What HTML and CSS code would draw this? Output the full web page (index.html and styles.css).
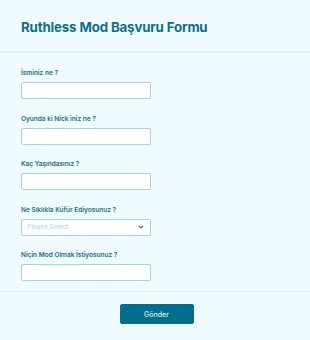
FILE: index.html
```html
<!DOCTYPE html>
<html lang="tr">
<head>
    <meta charset="UTF-8">
    <meta name="viewport" content="width=device-width, initial-scale=1.0">
    <title>Ruthless Mod Başvuru Formu</title>
    <link rel="stylesheet" href="styles.css">
</head>
<body>
    <div class="form-header">
        <h1 class="form-title">Ruthless Mod Başvuru Formu</h1>
    </div>

    <form class="form-body">
        <div class="field">
            <label class="field-label" for="isim">İsminiz ne ?</label>
            <input class="field-input" type="text" id="isim">
        </div>
        <div class="field">
            <label class="field-label" for="nick">Oyunda ki Nick iniz ne ?</label>
            <input class="field-input" type="text" id="nick">
        </div>
        <div class="field">
            <label class="field-label" for="yas">Kaç Yaşındasınız ?</label>
            <input class="field-input" type="text" id="yas">
        </div>
        <div class="field">
            <label class="field-label" for="kufur">Ne Sıklıkla Küfür Ediyosunuz ?</label>
            <div class="select-box">
                <span class="select-placeholder">Please Select</span>
                <svg class="select-arrow" width="6" height="4" viewBox="0 0 6 4">
                    <path d="M0.8 0.8 L3 3 L5.2 0.8" fill="none" stroke="#3f6f7f" stroke-width="1.1"/>
                </svg>
            </div>
        </div>
        <div class="field">
            <label class="field-label" for="neden">Niçin Mod Olmak İstiyosunuz ?</label>
            <input class="field-input" type="text" id="neden">
        </div>
    </form>

    <div class="form-footer">
        <button class="submit-btn" type="button">Gönder</button>
    </div>
</body>
</html>
```

FILE: styles.css
```css
body {
    margin: 0;
    background-color: #f0fbff;
    font-family: Inter, "Noto Sans", sans-serif;
    height: 340px;
    overflow: hidden;
}

.form-header {
    height: 51px;
    padding-left: 21px;
    border-bottom: 2px solid #d6f0f9;
    display: flex;
    align-items: center;
}

.form-title {
    margin: 0;
    font-size: 13.3px;
    font-weight: 700;
    color: #0f6e8b;
    letter-spacing: -0.15px;
    position: relative;
    top: 1px;
}

.form-body {
    padding: 16px 0 0 21px;
    display: flex;
    flex-direction: column;
    gap: 15.5px;
}

.field {
    display: flex;
    flex-direction: column;
    gap: 4px;
}

.field-label {
    font-size: 6.5px;
    line-height: 9px;
    font-weight: 600;
    color: #1a6d88;
}

.field-input,
.select-box {
    box-sizing: border-box;
    width: 130px;
    height: 17px;
    margin: 0;
    border: 1px solid #a6d3e1;
    border-radius: 2px;
    background-color: #fff;
}

.select-box {
    display: flex;
    align-items: center;
    justify-content: space-between;
    padding: 0 6px 0 5px;
}

.select-placeholder {
    font-size: 6.5px;
    color: #a9d8e8;
}

.form-footer {
    margin-top: 10px;
    border-top: 1px solid #d6f0f9;
    display: flex;
    justify-content: center;
    padding-top: 12px;
}

.submit-btn {
    width: 74px;
    height: 20px;
    margin-left: 3px;
    border: 1px solid #0a6e8b;
    border-radius: 2px;
    background-color: #006e8c;
    color: #d9eef4;
    font-family: Inter, "Noto Sans", sans-serif;
    font-size: 7px;
    font-weight: 500;
    padding: 0;
}
```
